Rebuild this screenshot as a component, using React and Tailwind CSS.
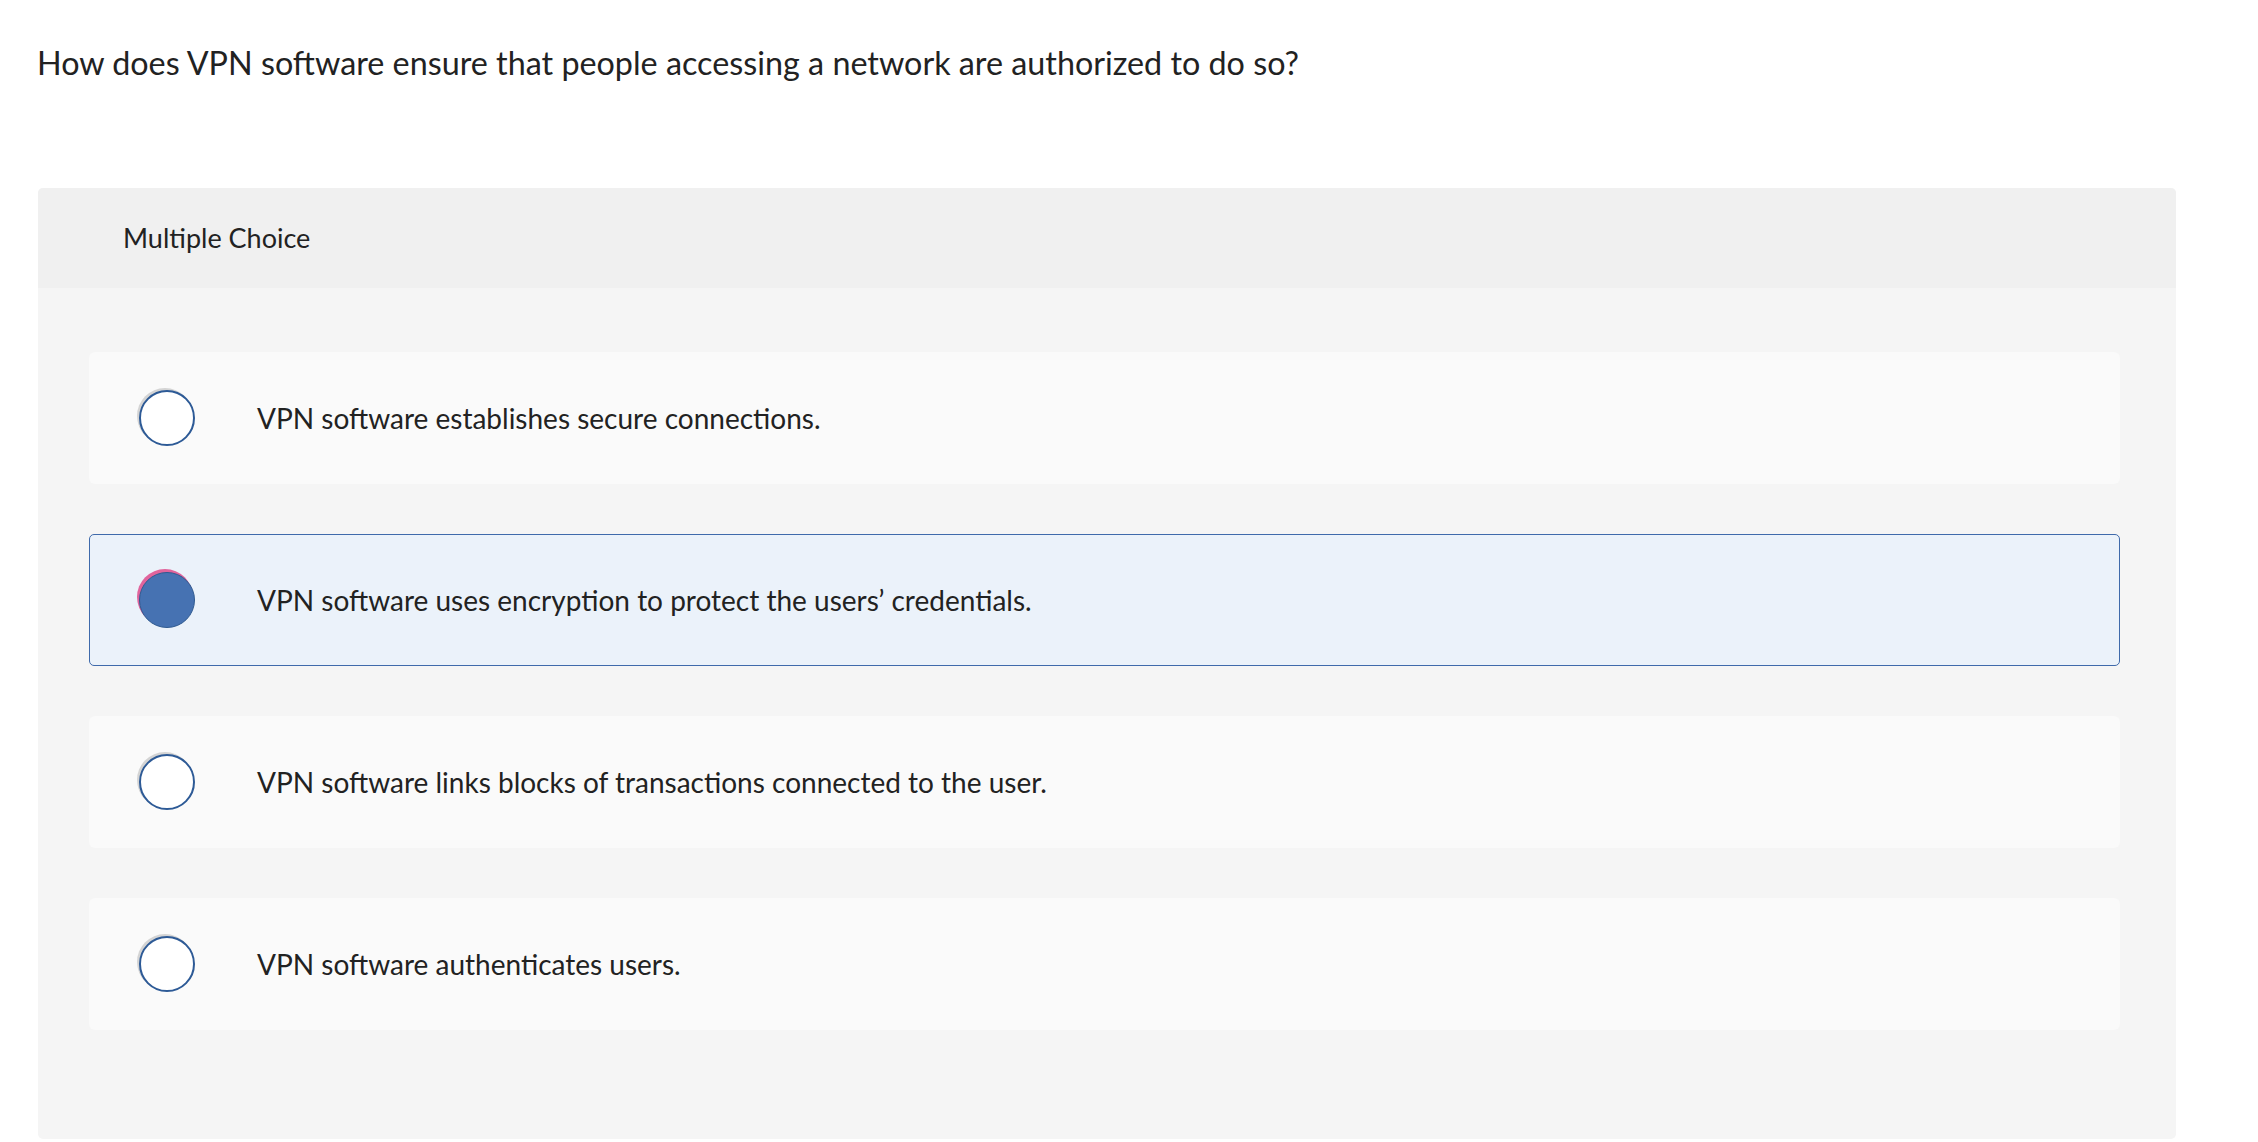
const options = [
  { id: 'a', text: 'VPN software establishes secure connections.' },
  { id: 'b', text: 'VPN software uses encryption to protect the users’ credentials.' },
  { id: 'c', text: 'VPN software links blocks of transactions connected to the user.' },
  { id: 'd', text: 'VPN software authenticates users.' },
];

const selected = 'b';

const Radio = ({ checked }) =>
  checked ? (
    <span className="block w-[56px] h-[56px] shrink-0 rounded-full bg-[#4672b2] border-[1.5px] border-[#2f5a90] shadow-[-2px_-3px_0_#e0649c]" />
  ) : (
    <span className="block w-[56px] h-[56px] shrink-0 rounded-full bg-white border-2 border-[#2d5a96] shadow-[-2px_-2px_0_#d4d4d4]" />
  );

export default function App() {
  return (
    <div className="min-h-screen w-full bg-white pt-[40px] font-['Lato','Liberation_Sans',sans-serif] text-[#222]">
      <h1 className="pl-[37px] text-[32.3px] leading-[46px] font-normal">
        How does VPN software ensure that people accessing a network are authorized to do so?
      </h1>

      <div className="ml-[38px] mt-[102px] w-[2138px] h-[951px] rounded-[5px] bg-[#f5f5f5] overflow-hidden flex flex-col">
        <div className="h-[100px] shrink-0 bg-[#f0f0f0] flex items-center pl-[85px] text-[27px]">
          Multiple Choice
        </div>

        <div className="flex flex-col gap-[50px] pt-[64px] pl-[51px] pr-[56px]">
          {options.map((o) => {
            const on = o.id === selected;
            return (
              <label
                key={o.id}
                className={
                  on
                    ? 'h-[132px] flex items-center rounded-[5px] border-[1.5px] border-[#3f6aab] bg-[#ebf2fa] pl-[49px] cursor-pointer'
                    : 'h-[132px] flex items-center rounded-[6px] bg-[#fafafa] pl-[50px] cursor-pointer'
                }
              >
                <Radio checked={on} />
                <span className="ml-[62px] text-[28px]">{o.text}</span>
              </label>
            );
          })}
        </div>
      </div>
    </div>
  );
}
